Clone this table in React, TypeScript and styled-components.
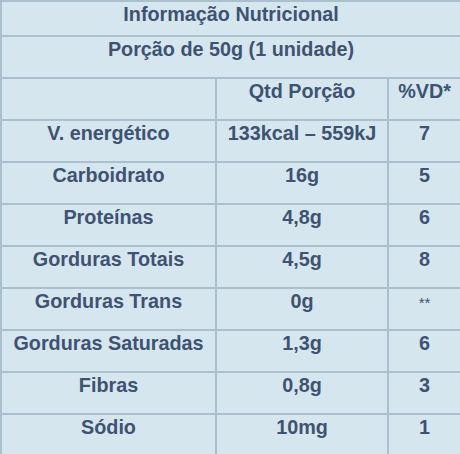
import React from 'react';
import styled, { createGlobalStyle } from 'styled-components';

const GlobalStyle = createGlobalStyle`
  html, body {
    margin: 0;
    padding: 0;
    background: #ffffff;
  }
`;

const Table = styled.table`
  width: 460px;
  border-collapse: collapse;
  table-layout: fixed;
  background-color: #d6e6ef;
  font-family: "Liberation Sans", Arial, sans-serif;
  font-weight: bold;
  font-size: 19.8px;
  color: #3e5371;
`;

const Cell = styled.td<{ $h?: number }>`
  height: ${(p) => p.$h ?? 42}px;
  padding: 1px 0 0 0;
  vertical-align: top;
  text-align: center;
  white-space: nowrap;
  border: 2px solid #abc0ce;
  box-sizing: border-box;
`;

const Stars = styled.span`
  font-weight: normal;
  font-size: 15px;
`;

interface Row {
  label: string;
  qty: string;
  vd: React.ReactNode;
}

const rows: Row[] = [
  { label: 'V. energético', qty: '133kcal – 559kJ', vd: '7' },
  { label: 'Carboidrato', qty: '16g', vd: '5' },
  { label: 'Proteínas', qty: '4,8g', vd: '6' },
  { label: 'Gorduras Totais', qty: '4,5g', vd: '8' },
  { label: 'Gorduras Trans', qty: '0g', vd: <Stars>**</Stars> },
  { label: 'Gorduras Saturadas', qty: '1,3g', vd: '6' },
  { label: 'Fibras', qty: '0,8g', vd: '3' },
  { label: 'Sódio', qty: '10mg', vd: '1' },
];

const App: React.FC = () => {
  return (
    <>
      <GlobalStyle />
      <Table>
        <colgroup>
          <col style={{ width: 215 }} />
          <col style={{ width: 172 }} />
          <col style={{ width: 73 }} />
        </colgroup>
        <tbody>
          <tr>
            <Cell $h={35} colSpan={3}>Informação Nutricional</Cell>
          </tr>
          <tr>
            <Cell colSpan={3}>Porção de 50g (1 unidade)</Cell>
          </tr>
          <tr>
            <Cell />
            <Cell>Qtd Porção</Cell>
            <Cell>%VD*</Cell>
          </tr>
          {rows.map((row, index) => (
            <tr key={index}>
              <Cell>{row.label}</Cell>
              <Cell>{row.qty}</Cell>
              <Cell>{row.vd}</Cell>
            </tr>
          ))}
        </tbody>
      </Table>
    </>
  );
};

export default App;
